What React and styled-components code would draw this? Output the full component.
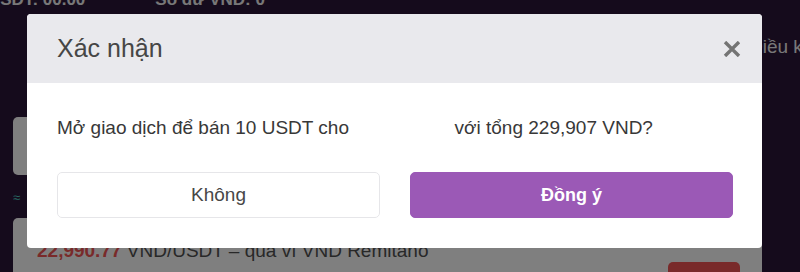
import React from 'react';
import styled, {createGlobalStyle} from 'styled-components';

const Global = createGlobalStyle`
  html, body { margin: 0; padding: 0; }
  body {
    width: 800px;
    height: 272px;
    overflow: hidden;
    font-family: "Liberation Sans", Arial, sans-serif;
  }
`

// page behind the dialog
const Page = styled.div`
  position: relative;
  width: 800px;
  height: 272px;
  overflow: hidden;
  background: #2a1638;
  display: flex;
  flex-direction: column;
  padding-left: 13px;
  box-sizing: border-box;

  & > * {
    flex-shrink: 0;
  }
`

const StatsRow = styled.div`
  display: flex;
  gap: 70px;
  margin-top: -10px;
  margin-left: -25px;
  height: 17px;
  font-size: 17px;
  font-weight: bold;
  color: #f0f0f0;
  white-space: nowrap;
`

const NavRow = styled.div`
  display: grid;
  grid-template-columns: 1fr 51px;
  margin-top: 29px;
  height: 24px;
  font-size: 19px;
  color: #f0f0f0;
  white-space: nowrap;
`

const Card = styled.div`
  width: 749px;
  background: #ffffff;
  border-radius: 5px;
  height: ${p => p.$height}px;
  margin-top: ${p => p.$top}px;
  box-sizing: border-box;
`

const Approx = styled.div`
  margin-top: 15px;
  height: 28px;
  font-size: 13px;
  color: #4fd1c5;
`

const OfferCard = styled(Card)`
  padding: 21px 22px 0 24px;
  display: flex;
  flex-direction: column;
`

const PriceLine = styled.div`
  font-size: 19px;
  line-height: 23px;
  color: #505050;
  white-space: nowrap;

  & b {
    color: #f25555;
  }
`

const SellButton = styled.div`
  align-self: flex-end;
  margin-top: 0;
  width: 72px;
  height: 30px;
  border-radius: 5px;
  background: #f25555;
`

// dialog
const Backdrop = styled.div`
  position: absolute;
  inset: 0;
  background: rgba(0, 0, 0, 0.5);
  display: flex;
  align-items: flex-start;
  padding: 14px 0 0 27px;
`

const Dialog = styled.div`
  width: 735px;
  background: #fff;
  border-radius: 4px;
  overflow: hidden;
`

const DialogHeader = styled.div`
  height: 69px;
  background: #e9e9ed;
  display: flex;
  align-items: center;
  justify-content: space-between;
  padding: 0 21px 0 30px;
`

const Title = styled.h3`
  margin: 0;
  font-weight: normal;
  font-size: 25px;
  line-height: 1;
  color: #464646;
`

const Close = styled.button`
  border: 0;
  background: none;
  padding: 0;
  width: 18px;
  height: 16px;
  display: flex;
  cursor: pointer;
`

const DialogBody = styled.div`
  padding: 31px 29px 30px 30px;
`

const Message = styled.p`
  margin: 0 0 31px;
  font-size: 19px;
  line-height: 27px;
  color: #383838;
  white-space: nowrap;
`

const Hidden = styled.span`
  display: inline-block;
  width: 95px;
`

const Actions = styled.div`
  display: grid;
  grid-template-columns: 1fr 1fr;
  gap: 30px;
`

const Button = styled.button`
  height: 46px;
  border-radius: 5px;
  font-family: inherit;
  cursor: pointer;
  border: 1px solid ${p => p.$primary ? '#9b59b6' : '#e6e6e9'};
  background: ${p => p.$primary ? '#9b59b6' : '#fff'};
  color: ${p => p.$primary ? '#fff' : '#474747'};
  font-size: ${p => p.$primary ? 18 : 19}px;
  font-weight: ${p => p.$primary ? 'bold' : 'normal'};
`

const App = () => {
  return (
    <>
      <Global/>
      <Page>
        <StatsRow>
          <span>USDT: 00.00</span>
          <span>Số dư VND: 0</span>
        </StatsRow>
        <NavRow>
          <span/>
          <span>Điều khoản</span>
        </NavRow>
        <Card $top={57} $height={58}/>
        <Approx>≈</Approx>
        <OfferCard $top={0} $height={80}>
          <PriceLine><b>22,990.77</b> VND/USDT – qua ví VND Remitano</PriceLine>
          <SellButton/>
        </OfferCard>

        <Backdrop>
          <Dialog>
            <DialogHeader>
              <Title>Xác nhận</Title>
              <Close aria-label="close">
                <svg width="18" height="16" viewBox="0 0 18 16">
                  <path d="M2 1 L16 15 M16 1 L2 15" stroke="#747474" strokeWidth="3.4" fill="none"/>
                </svg>
              </Close>
            </DialogHeader>
            <DialogBody>
              <Message>Mở giao dịch để bán 10 USDT cho <Hidden/> với tổng 229,907 VND?</Message>
              <Actions>
                <Button>Không</Button>
                <Button $primary>Đồng ý</Button>
              </Actions>
            </DialogBody>
          </Dialog>
        </Backdrop>
      </Page>
    </>
  )
}

export default App
